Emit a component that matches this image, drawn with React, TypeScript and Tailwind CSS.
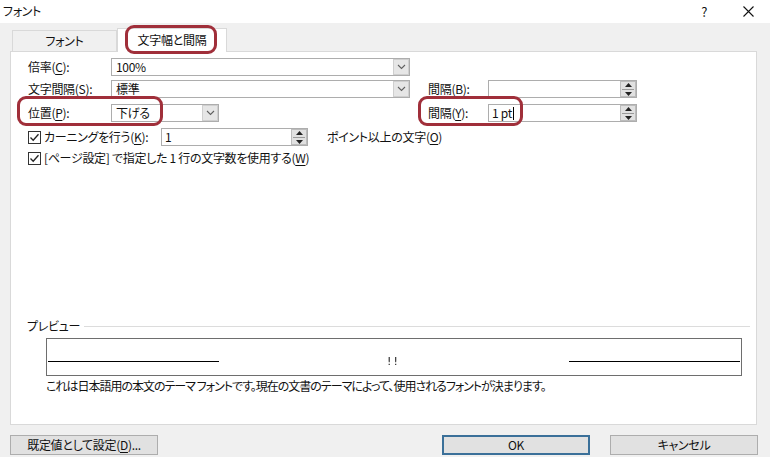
import React from 'react';

const ring = 'absolute border-[3px] border-[#a02f3a] rounded-[9px] pointer-events-none';

function Key({ k }: { k: string }) {
  return <span className="underline underline-offset-2">{k}</span>;
}

function Chevron() {
  return (
    <svg width="9" height="6" viewBox="0 0 9 6">
      <path d="M1 1 L4.5 4.5 L8 1" fill="none" stroke="#606060" strokeWidth="1.1" />
    </svg>
  );
}

function Combo({ w, value }: { w: string; value: string }) {
  return (
    <div className={`${w} h-[18px] border border-[#adadad] bg-white flex items-center`}>
      <span className="flex-1 pl-[4px] leading-none">{value}</span>
      <div className="w-[16px] h-[16px] bg-[#e6e6e6] border border-[#cfcfcf] flex items-center justify-center">
        <Chevron />
      </div>
    </div>
  );
}

function Spin({ w, value, caret }: { w: string; value?: string; caret?: boolean }) {
  return (
    <div className={`${w} h-[18px] border border-[#adadad] bg-white flex items-center`}>
      <span className="flex-1 pl-[3px] leading-none flex items-center">
        {value}
        {caret && <span className="inline-block w-px h-[13px] bg-black ml-px" />}
      </span>
      <div className="w-[16px] h-[16px] bg-[#e1e1e1] border border-[#bcbcbc] flex flex-col items-center justify-center gap-[2px]">
        <svg width="7" height="4" viewBox="0 0 7 4">
          <path d="M0 4 L3.5 0 L7 4 Z" fill="#222" />
        </svg>
        <div className="w-[12px] h-px bg-[#9a9a9a]" />
        <svg width="7" height="4" viewBox="0 0 7 4">
          <path d="M0 0 L3.5 4 L7 0 Z" fill="#222" />
        </svg>
      </div>
    </div>
  );
}

function Check() {
  return (
    <div className="w-[13px] h-[13px] border border-[#333] bg-white flex items-center justify-center">
      <svg width="11" height="11" viewBox="0 0 11 11">
        <path d="M1.5 5.5 L4.2 8.3 L9.5 2.2" fill="none" stroke="#222" strokeWidth="1.3" />
      </svg>
    </div>
  );
}

function Button({ children, primary }: { children: React.ReactNode; primary?: boolean }) {
  return (
    <div
      className={`w-[148px] h-[20px] bg-[#e1e1e1] flex items-center justify-center leading-none ${
        primary ? 'border-2 border-[#3b7099]' : 'border border-[#adadad]'
      }`}
    >
      {children}
    </div>
  );
}

export default function App() {
  return (
    <div className="w-[770px] h-[457px] bg-[#f0f0f0] flex flex-col overflow-hidden text-[12px] text-[#111] tracking-[-0.3px] font-['Noto_Sans_CJK_JP','Liberation_Sans',sans-serif] [font-feature-settings:'palt']">
      {/* title bar */}
      <div className="h-[23px] bg-white flex items-center pl-[3px]">
        <span className="leading-none mt-[-2px]">フォント</span>
        <div className="ml-auto flex items-center gap-[36px] pr-[16px]">
          <span className="text-[13px] leading-none">?</span>
          <svg width="11" height="11" viewBox="0 0 11 11">
            <path d="M0.5 0.5 L10.5 10.5 M10.5 0.5 L0.5 10.5" stroke="#111" strokeWidth="1.1" />
          </svg>
        </div>
      </div>

      {/* tabs */}
      <div className="h-[28px] flex items-end pl-[12px]">
        <div className="w-[105px] h-[21px] border border-b-0 border-[#d9d9d9] bg-[#f0f0f0] flex items-center justify-center">
          フォント
        </div>
        <div className="relative z-10 w-[110px] h-[24px] -mb-px border border-b-0 border-[#d9d9d9] bg-white flex items-center justify-center pb-[2px]">
          文字幅と間隔
          <div className={`${ring} left-[7px] top-[-4px] w-[92px] h-[29px]`} />
        </div>
      </div>

      {/* panel */}
      <div className="ml-[10px] w-[747px] h-[374px] bg-white border border-[#d9d9d9] flex flex-col pl-[17px]">
        <div className="mt-[6px] h-[18px] flex items-center">
          <span className="w-[83px]">
            倍率(<Key k="C" />):
          </span>
          <Combo w="w-[299px]" value="100%" />
        </div>

        <div className="mt-[4px] h-[18px] flex items-center">
          <span className="w-[83px]">
            文字間隔(<Key k="S" />):
          </span>
          <Combo w="w-[299px]" value="標準" />
          <span className="ml-[18px] w-[60px]">
            間隔(<Key k="B" />):
          </span>
          <Spin w="w-[149px]" />
        </div>

        <div className="mt-[6px] h-[18px] flex items-center">
          <span className="relative w-[83px]">
            位置(<Key k="P" />):
            <div className={`${ring} left-[-11px] top-[-8px] w-[146px] h-[30px]`} />
          </span>
          <Combo w="w-[108px]" value="下げる" />
          <span className="relative ml-[209px] w-[60px]">
            間隔(<Key k="Y" />):
            <div className={`${ring} left-[-10px] top-[-8px] w-[105px] h-[30px]`} />
          </span>
          <Spin w="w-[149px]" value="1 pt" caret />
        </div>

        <div className="mt-[6px] h-[18px] flex items-center">
          <Check />
          <span className="ml-[3px] w-[117px]">
            カーニングを行う(<Key k="K" />):
          </span>
          <Spin w="w-[147px]" value="1" />
          <span className="ml-[19px]">
            ポイント以上の文字(<Key k="O" />)
          </span>
        </div>

        <div className="mt-[4px] h-[16px] flex items-center">
          <Check />
          <span className="ml-[3px]">
            [ページ設定] で指定した 1 行の文字数を使用する(<Key k="W" />)
          </span>
        </div>

        {/* preview */}
        <div className="mt-[152px] h-[16px] flex items-center -ml-px">
          <span>プレビュー</span>
          <div className="ml-[4px] w-[666px] h-px bg-[#dcdcdc]" />
        </div>
        <div className="mt-[4px] ml-[18px] w-[696px] h-[38px] border border-[#6e6e6e] flex items-end pb-[13px] px-px">
          <div className="w-[171px] h-px bg-black" />
          <span className="ml-[168px] mb-[-5px] leading-none tracking-[2px] font-['DejaVu_Sans',sans-serif] text-[11px] text-[#222] will-change-transform">
            !!
          </span>
          <div className="ml-auto w-[171px] h-px bg-black" />
        </div>
        <div className="ml-[18px] mt-[2px] leading-none pt-[2px] tracking-[-1px]">
          これは日本語用の本文のテーマ フォントです。現在の文書のテーマによって、使用されるフォントが決まります。
        </div>
      </div>

      {/* buttons */}
      <div className="mt-[10px] flex items-center pl-[10px]">
        <Button>
          既定値として設定(<Key k="D" />)...
        </Button>
        <div className="ml-auto flex gap-[20px] pr-[12px]">
          <Button primary>OK</Button>
          <Button>キャンセル</Button>
        </div>
      </div>
    </div>
  );
}
